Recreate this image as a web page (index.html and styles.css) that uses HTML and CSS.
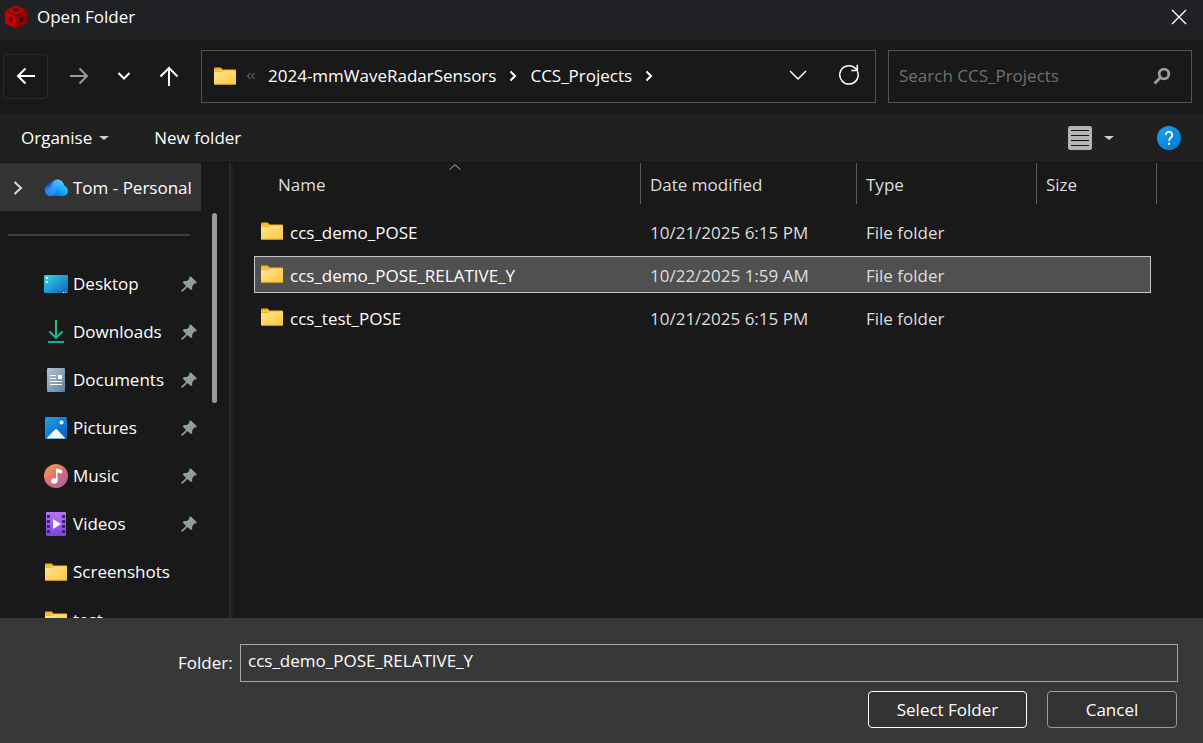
FILE: index.html
```html
<!DOCTYPE html>
<html lang="en">
<head>
  <meta charset="UTF-8" />
  <meta name="viewport" content="width=device-width, initial-scale=1" />
  <title>Open Folder</title>
  <link rel="stylesheet" href="styles.css">
</head>
<body>
  <!-- Shared icons -->
  <svg class="defs" width="0" height="0" aria-hidden="true">
    <defs>
      <linearGradient id="gFolder" x1="0" y1="0" x2="1" y2="1">
        <stop offset="0" stop-color="#ffe59a" />
        <stop offset="1" stop-color="#ffc937" />
      </linearGradient>
      <linearGradient id="gHelp" x1="0" y1="0" x2="1" y2="1">
        <stop offset="0" stop-color="#1f9ff0" />
        <stop offset="1" stop-color="#0078d4" />
      </linearGradient>
      <linearGradient id="gDesktop" x1="0" y1="0" x2="1" y2="1">
        <stop offset="0" stop-color="#35d6e0" />
        <stop offset="1" stop-color="#0a62c0" />
      </linearGradient>
      <linearGradient id="gDown" x1="0" y1="0" x2="0" y2="24" gradientUnits="userSpaceOnUse">
        <stop offset="0" stop-color="#2cc88a" />
        <stop offset="1" stop-color="#12a79b" />
      </linearGradient>
      <linearGradient id="gDoc" x1="0" y1="0" x2="1" y2="1">
        <stop offset="0" stop-color="#b4c4d6" />
        <stop offset="1" stop-color="#5d7fa3" />
      </linearGradient>
      <linearGradient id="gPic" x1="0" y1="0" x2="1" y2="1">
        <stop offset="0" stop-color="#1f9fe8" />
        <stop offset="1" stop-color="#0560b8" />
      </linearGradient>
      <linearGradient id="gMusic" x1="0" y1="0" x2="1" y2="1">
        <stop offset="0.1" stop-color="#f39355" />
        <stop offset="0.6" stop-color="#cb6d7c" />
        <stop offset="1" stop-color="#9a5fc4" />
      </linearGradient>
      <linearGradient id="gVideo" x1="0" y1="0" x2="0" y2="1">
        <stop offset="0" stop-color="#b375f5" />
        <stop offset="1" stop-color="#8142e0" />
      </linearGradient>
      <linearGradient id="gCloudBack" x1="0" y1="0" x2="0" y2="1">
        <stop offset="0" stop-color="#1a4fc4" />
        <stop offset="1" stop-color="#2d9bff" />
      </linearGradient>
      <linearGradient id="gCloudTop" x1="0" y1="1" x2="1" y2="0">
        <stop offset="0" stop-color="#1c7df5" />
        <stop offset="0.55" stop-color="#3aa2ff" />
        <stop offset="1" stop-color="#5ad6ff" />
      </linearGradient>
      <linearGradient id="gCloudFront" x1="0" y1="1" x2="1" y2="0">
        <stop offset="0" stop-color="#0a5fe0" />
        <stop offset="0.6" stop-color="#12b0f7" />
        <stop offset="1" stop-color="#2fd6ff" />
      </linearGradient>
    </defs>
    <symbol id="folder" viewBox="0 0 24 24">
      <path d="M1 5V4.500a1 1 0 0 1 1-1h5.500a1 1 0 0 1 .8.400L9.500 5.500H22a1 1 0 0 1 1 1V10H1z" fill="#f9b417" />
      <rect x="1" y="6.500" width="22" height="14" rx="0.600" fill="url(#gFolder)" />
      <path d="M1 7.500h7.500L10 6" fill="none" stroke="#e9a51a" stroke-width="0.800" />
      <path d="M1.300 20.200h21.400" stroke="#e9ad2c" stroke-width="0.800" />
    </symbol>
    <symbol id="pin" viewBox="0 0 16 16">
      <path d="M9.600.2 15.800 6.200 14.900 7.500 13.500 7.600 11.300 10 11.200 13.200 9.900 14 6.500 11 1.200 16 0 14.800 5.100 9.900 1.800 6.600 2.800 5.100 6 4.900 8.300 2.700 8.400 1z" fill="#929ca3" />
    </symbol>
  </svg>

  <div class="dialog">
    <header class="titlebar">
      <svg class="logo" width="24" height="24" viewBox="0 0 24 24" aria-hidden="true">
        <path d="M12 .5 23 5.500V18L12 23.500 1 18V5.500z" fill="#8e0000" />
        <path d="M12 .5 23 5.500 12 10.500 1 5.500z" fill="#b80404" />
        <path d="M1 5.500 12 10.500v13L1 18z" fill="#c40000" />
        <path d="M12 10.500 23 5.500V18l-11 5.500z" fill="#960000" />
        <path d="M1 5.500 12 10.500 23 5.500M12 10.500v13" fill="none" stroke="#5a0505" stroke-width="0.800" />
        <ellipse cx="12" cy="5" rx="3" ry="1.400" fill="#2a0808" />
        <path d="M4.800 12 7.800 13.200v4L4.800 16z" fill="#2a0808" />
        <path d="M15.800 13.500 19.200 12v4l-3.400 1.500z" fill="#2a0808" />
      </svg>
      <h1 class="title">Open Folder</h1>
      <button class="close" type="button" aria-label="Close">
        <svg width="16" height="16" viewBox="0 0 16 16"><path d="M1 1l14 14M15 1 1 15" stroke="#fff" stroke-width="1.400" /></svg>
      </button>
    </header>

    <nav class="navbar">
      <button class="nav-btn boxed" type="button" aria-label="Back">
        <svg width="20" height="20" viewBox="0 0 20 20"><path d="M19 10H2M9.500 2.500 2 10l7.500 7.500" /></svg>
      </button>
      <button class="nav-btn dim" type="button" aria-label="Forward">
        <svg width="20" height="20" viewBox="0 0 20 20"><path d="M1 10h17M10.500 2.500 18 10l-7.500 7.500" /></svg>
      </button>
      <button class="nav-btn" type="button" aria-label="Recent locations">
        <svg width="14" height="20" viewBox="0 0 14 20"><path d="M1.500 7 7 12.500 12.500 7" /></svg>
      </button>
      <button class="nav-btn" type="button" aria-label="Up">
        <svg width="20" height="20" viewBox="0 0 20 20"><path d="M10 20V2M1.500 10.500 10 2l8.500 8.500" /></svg>
      </button>

      <div class="address">
        <svg width="24" height="24"><use href="#folder" /></svg>
        <svg class="overflow" width="10" height="8" viewBox="0 0 10 8"><path d="M4.500 1l-3 3 3 3M8.500 1l-3 3 3 3" /></svg>
        <a class="crumb" href="#">2024-mmWaveRadarSensors</a>
        <svg class="sep" width="8" height="12" viewBox="0 0 8 12"><path d="M1.500 1.500 6 6l-4.500 4.500" /></svg>
        <a class="crumb" href="#">CCS_Projects</a>
        <svg class="sep" width="8" height="12" viewBox="0 0 8 12"><path d="M1.500 1.500 6 6l-4.500 4.500" /></svg>
        <button class="addr-btn history" type="button" aria-label="Previous locations">
          <svg width="18" height="16" viewBox="0 0 18 16"><path d="M1 3l8 8 8-8" /></svg>
        </button>
        <button class="addr-btn" type="button" aria-label="Refresh">
          <svg width="22" height="24" viewBox="0 0 22 24"><path d="M19.500 7.500A9.200 9.200 0 1 1 15.500 2.900L19 5.700M19.300 .8v5.700h-6" /></svg>
        </button>
      </div>

      <div class="search">
        <input type="search" aria-label="Search CCS_Projects" placeholder="Search CCS_Projects">
        <svg width="18" height="18" viewBox="0 0 18 18"><circle cx="11" cy="7" r="4.800" fill="none" stroke="#9c9c9c" stroke-width="2.800" /><path d="M7.500 10.500 1.500 16.500" stroke="#9c9c9c" stroke-width="2.800" /></svg>
      </div>
    </nav>

    <div class="toolbar">
      <button class="tool" type="button">Organise <span class="caret"></span></button>
      <button class="tool" type="button">New folder</button>
      <button class="tool view" type="button" aria-label="Change your view">
        <svg width="24" height="24" viewBox="0 0 24 24"><rect width="24" height="24" rx="2.500" fill="#b4b4b4" /><path d="M3 4.500h18M3 9.500h18M3 14.500h18M3 19.500h18" stroke="#111" /></svg>
        <span class="caret"></span>
      </button>
      <button class="help" type="button" aria-label="Help">
        <svg width="24" height="24" viewBox="0 0 24 24"><circle cx="12" cy="12" r="12" fill="url(#gHelp)" /><path d="M8.800 9a3.200 3.200 0 1 1 5.200 2.500c-1.200 1-2 1.500-2 3.200" fill="none" stroke="#fff" stroke-width="1.800" /><circle cx="12" cy="17.800" r="1.200" fill="#fff" /></svg>
      </button>
    </div>

    <main class="content">
      <aside class="sidebar">
        <ul class="places">
          <li class="place current">
            <svg class="expand" width="10" height="16" viewBox="0 0 10 16"><path d="M1.500 2 8 8l-6.500 6" /></svg>
            <svg class="icon" width="24" height="24" viewBox="0 0 24 24">
              <path d="M6 20a6 6 0 0 1-1.500-11.500C6 6 8 5 10 6l3 8-5 6z" fill="url(#gCloudBack)" />
              <path d="M3 19C1.500 15.500 3 12 6.500 12 8 6 10 3.500 13.500 3.500c3.500 0 6 2.500 6.500 5.500L12 17l-4 3z" fill="url(#gCloudTop)" />
              <path d="M6 20c5 0 5.500-5 8-8.500 2-3 5-3.500 7-1.500 3 2 3.500 5 2.300 7.500C22.500 19 21 20 19 20z" fill="url(#gCloudFront)" />
            </svg>
            <a href="#">Tom - Personal</a>
          </li>
          <li class="divider"></li>
          <li class="place">
            <svg class="icon" width="24" height="24" viewBox="0 0 24 24"><rect y="3" width="24" height="18" rx="1" fill="url(#gDesktop)" /><path d="M2 5h2v2H2zM2 9h2v2H2zM19 20h1v1h-1zM21 20h1v1h-1z" fill="#fff" /></svg>
            <a href="#">Desktop</a>
            <svg class="pin" width="16" height="16"><use href="#pin" /></svg>
          </li>
          <li class="place">
            <svg class="icon" width="24" height="24" viewBox="0 0 24 24"><path d="M12 0v18M5.500 11.500 12 18l6.500-6.500M4 22h16" fill="none" stroke="url(#gDown)" stroke-width="2" /></svg>
            <a href="#">Downloads</a>
            <svg class="pin" width="16" height="16"><use href="#pin" /></svg>
          </li>
          <li class="place">
            <svg class="icon" width="24" height="24" viewBox="0 0 24 24"><rect x="3" width="18" height="24" rx="1.200" fill="url(#gDoc)" /><path d="M6 7.500h6M6 10.500h6M6 13.500h12M6 16.500h12" stroke="#fff" /><rect x="14" y="7" width="4" height="4" fill="#fff" /></svg>
            <a href="#">Documents</a>
            <svg class="pin" width="16" height="16"><use href="#pin" /></svg>
          </li>
          <li class="place">
            <svg class="icon" width="24" height="24" viewBox="0 0 24 24"><rect x="1" y="1" width="22" height="22" rx="1.500" fill="url(#gPic)" /><path d="M2.500 22.500 11 13.500q1-1 2 0l8.500 9z" fill="#f2f8ff" /><circle cx="17.500" cy="6.500" r="2" fill="#fff" /></svg>
            <a href="#">Pictures</a>
            <svg class="pin" width="16" height="16"><use href="#pin" /></svg>
          </li>
          <li class="place">
            <svg class="icon" width="24" height="24" viewBox="0 0 24 24"><circle cx="12" cy="12" r="12" fill="url(#gMusic)" /><path d="M12 4.500l6 1.500v3.500l-4.500-1V17H12z" fill="#fff" /><ellipse cx="10.300" cy="17" rx="3.200" ry="2.800" fill="#fff" /></svg>
            <a href="#">Music</a>
            <svg class="pin" width="16" height="16"><use href="#pin" /></svg>
          </li>
          <li class="place">
            <svg class="icon" width="24" height="24" viewBox="0 0 24 24"><rect x="2" width="20" height="24" rx="1.200" fill="url(#gVideo)" /><path d="M3 3h3v3H3zM3 8h3v3H3zM3 13h3v3H3zM3 18h3v3H3zM18 3h3v3h-3zM18 8h3v3h-3zM18 13h3v3h-3zM18 18h3v3h-3z" fill="#3d2470" /><path d="M9 7l8 5-8 5z" fill="#fff" /></svg>
            <a href="#">Videos</a>
            <svg class="pin" width="16" height="16"><use href="#pin" /></svg>
          </li>
          <li class="place">
            <svg class="icon" width="24" height="24"><use href="#folder" /></svg>
            <a href="#">Screenshots</a>
          </li>
          <li class="place">
            <svg class="icon" width="24" height="24"><use href="#folder" /></svg>
            <a href="#">test</a>
          </li>
        </ul>
        <div class="scrollbar"></div>
      </aside>

      <section class="files">
        <table class="list">
          <colgroup>
            <col>
            <col class="col-date">
            <col class="col-type">
            <col class="col-size">
          </colgroup>
          <thead>
            <tr>
              <th class="name">
                <button type="button">Name</button>
                <svg class="sort" width="12" height="6" viewBox="0 0 12 6"><path d="M.5 5.500 6 .8l5.500 4.700" /></svg>
              </th>
              <th><button type="button">Date modified</button></th>
              <th><button type="button">Type</button></th>
              <th class="size"><button type="button">Size</button></th>
            </tr>
          </thead>
          <tbody>
            <tr>
              <td class="name"><svg width="24" height="24"><use href="#folder" /></svg>ccs_demo_POSE</td>
              <td>10/21/2025 6:15 PM</td>
              <td>File folder</td>
              <td></td>
            </tr>
            <tr class="selected">
              <td class="name"><svg width="24" height="24"><use href="#folder" /></svg>ccs_demo_POSE_RELATIVE_Y</td>
              <td>10/22/2025 1:59 AM</td>
              <td>File folder</td>
              <td></td>
            </tr>
            <tr>
              <td class="name"><svg width="24" height="24"><use href="#folder" /></svg>ccs_test_POSE</td>
              <td>10/21/2025 6:15 PM</td>
              <td>File folder</td>
              <td></td>
            </tr>
          </tbody>
        </table>
      </section>
    </main>

    <footer class="footer">
      <div class="field">
        <label for="folderName">Folder:</label>
        <input type="text" id="folderName" value="ccs_demo_POSE_RELATIVE_Y">
      </div>
      <div class="actions">
        <button class="btn primary" type="button">Select Folder</button>
        <button class="btn" type="button">Cancel</button>
      </div>
    </footer>
  </div>
</body>
</html>
```
FILE: styles.css
```css
* {
  box-sizing: border-box;
}

body {
  margin: 0;
  background: #191919;
  color: #fff;
  font-family: "Segoe UI", "Open Sans", "Noto Sans", sans-serif;
  font-size: 17px;
  line-height: 24px;
}

button,
input {
  font: inherit;
  color: inherit;
  background: none;
  border: none;
  padding: 0;
}

a {
  color: inherit;
  text-decoration: none;
}

svg {
  display: block;
  flex-shrink: 0;
}

.defs {
  position: absolute;
}

.dialog {
  display: flex;
  flex-direction: column;
  height: 100vh;
}

/* Title bar */
.titlebar {
  display: flex;
  align-items: center;
  height: 40px;
  padding: 0 16px 6px 4px;
  background: #202124;
}

.title {
  flex: 1;
  margin: 0 0 0 9px;
  font-size: 17px;
  font-weight: 400;
}

/* Navigation */
.navbar {
  display: flex;
  align-items: center;
  height: 74px;
  padding: 0 11px 2px 3px;
  background: #191919;
}

.nav-btn {
  display: flex;
  align-items: center;
  justify-content: center;
  width: 45px;
  height: 45px;
}

.nav-btn.boxed {
  border: 1px solid #2b2b2b;
  border-radius: 4px;
  margin-right: 8px;
}

.nav-btn path {
  fill: none;
  stroke: #fff;
  stroke-width: 2;
}

.nav-btn.dim path {
  stroke: #9a9a9a;
}

.address {
  display: flex;
  flex: 1;
  align-items: center;
  height: 53px;
  margin-left: 10px;
  padding: 0 15px 0 11px;
  border: 1px solid #535353;
}

.overflow {
  margin: 0 12px 0 9px;
}

.overflow path {
  fill: none;
  stroke: #8c8c8c;
}

.sep {
  margin: 0 13px;
}

.sep path {
  fill: none;
  stroke: #fff;
  stroke-width: 2;
}

.addr-btn path {
  fill: none;
  stroke: #fff;
  stroke-width: 1.5;
}

.history {
  margin: 0 31px 0 auto;
}

.search {
  display: flex;
  align-items: center;
  width: 304px;
  height: 53px;
  margin-left: 12px;
  padding: 0 20px 0 10px;
  border: 1px solid #535353;
}

.search input {
  flex: 1;
  min-width: 0;
  outline: none;
}

.search input::placeholder {
  color: #707070;
  opacity: 1;
}

/* Toolbar */
.toolbar {
  display: flex;
  align-items: center;
  height: 49px;
  padding: 0 22px 0 21px;
  background: #202020;
  border-bottom: 1px solid #141414;
}

.tool {
  display: flex;
  align-items: center;
  margin-right: 45px;
}

.caret {
  margin-left: 7px;
  border: 5px solid transparent;
  border-top: 4px solid #d0d0d0;
  border-bottom: none;
}

.view {
  margin: 0 43px 0 auto;
}

.view .caret {
  margin-left: 12px;
}

/* Left pane */
.content {
  display: flex;
  flex: 1;
  min-height: 0;
  overflow: hidden;
}

.sidebar {
  display: flex;
  width: 233px;
  flex-shrink: 0;
  border-right: 2px solid #202020;
  box-shadow: inset -2px 0 #2b2b2b;
}

.places {
  width: 201px;
  margin: 0;
  padding: 0;
  list-style: none;
}

.place {
  display: flex;
  align-items: center;
  height: 48px;
  padding: 1px 4px 0 44px;
}

.place.current {
  padding-left: 13px;
  background: #333;
}

.expand {
  margin-right: 21px;
}

.expand path {
  fill: none;
  stroke: #d8d8d8;
  stroke-width: 2;
}

.icon {
  margin-right: 5px;
}

.pin {
  margin-left: auto;
}

.divider {
  height: 48px;
  padding: 23px 11px 0 8px;
}

.divider::before {
  content: "";
  display: block;
  height: 2px;
  background: #3d3d3d;
}

.scrollbar {
  width: 5px;
  height: 190px;
  margin: 50px 0 0 11px;
  border-radius: 3px;
  background: #9a9a9a;
}

/* File list */
.files {
  flex: 1;
  min-width: 0;
  padding: 0 52px 0 21px;
}

.list {
  width: 100%;
  margin-top: -6px;
  table-layout: fixed;
  border-collapse: separate;
  border-spacing: 0 6px;
}

.col-date {
  width: 216px;
}

.col-type {
  width: 180px;
}

.col-size {
  width: 114px;
}

.list th {
  position: relative;
  height: 44px;
  padding: 0;
  vertical-align: top;
  font-weight: 400;
}

.list th button {
  display: block;
  width: 100%;
  height: 41px;
  padding: 2px 0 0 9px;
  border-right: 1px solid #5c5c5c;
  color: #dedede;
  text-align: left;
}

.list th.name button {
  padding-left: 24px;
}

/* last header reaches past the rows */
.list th.size button {
  width: calc(100% + 6px);
}

.sort {
  position: absolute;
  top: 1px;
  left: calc(50% + 1px);
}

.sort path {
  fill: none;
  stroke: #b0b0b0;
}

.list td {
  height: 37px;
  padding: 3px 0 0 9px;
  border: 1px solid transparent;
  border-width: 1px 0;
  color: #dedede;
}

.list td.name {
  display: flex;
  align-items: center;
  padding-left: 5px;
  border-left-width: 1px;
  color: #fff;
}

.list td.name svg {
  margin: 0 6px 4px 0;
}

.list td:last-child {
  border-right-width: 1px;
}

.selected td {
  background: #505050;
  border-color: #c8c8c8;
}

/* Footer */
.footer {
  height: 125px;
  padding: 26px 25px 0 178px;
  background: #383838;
}

.field {
  display: flex;
  align-items: center;
}

.field label {
  width: 62px;
}

.field input {
  flex: 1;
  min-width: 0;
  height: 38px;
  padding: 0 7px 5px;
  border: 1px solid #a6a6a6;
}

.actions {
  display: flex;
  justify-content: flex-end;
  gap: 20px;
  margin-top: 9px;
  padding-right: 1px;
}

.btn {
  width: 130px;
  height: 37px;
  border: 1px solid #9b9b9b;
  border-radius: 4px;
  background: #333;
}

.btn.primary {
  width: 159px;
  border-color: #fff;
}
```
